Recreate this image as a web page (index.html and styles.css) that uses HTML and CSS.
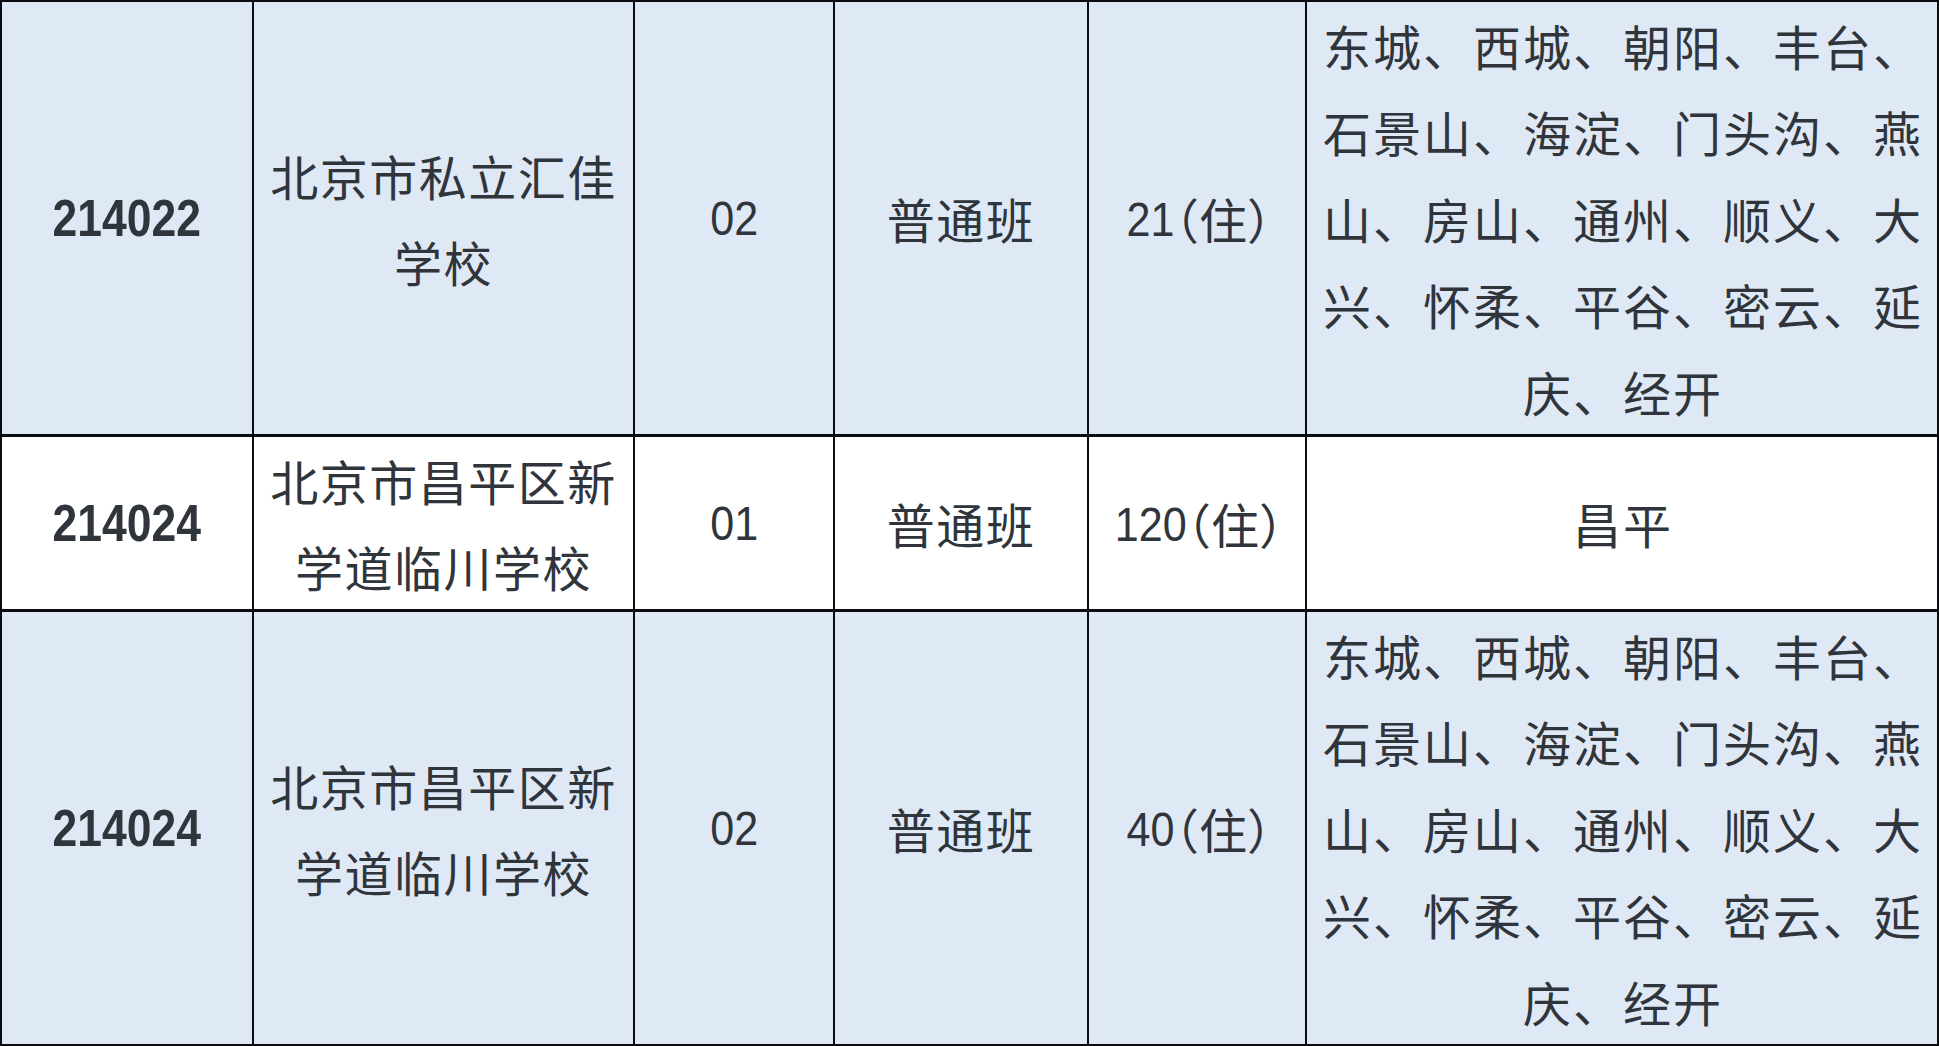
FILE: index.html
```html
<!DOCTYPE html>
<html lang="zh-CN">
<head>
<meta charset="utf-8">
<title>招生计划</title>
<link rel="stylesheet" href="styles.css">
</head>
<body>
<div class="sheet">
  <div class="cell blue code"><span class="digits">214022</span></div>
  <div class="cell blue cjk name">北京市私立汇佳学校</div>
  <div class="cell blue num"><span class="digits">02</span></div>
  <div class="cell blue cjk">普通班</div>
  <div class="cell blue quota"><span class="digits d2">21</span>（住）</div>
  <div class="cell blue cjk area">东城、西城、朝阳、丰台、<br>石景山、海淀、门头沟、燕<br>山、房山、通州、顺义、大<br>兴、怀柔、平谷、密云、延<br>庆、经开</div>

  <div class="cell white code"><span class="digits">214024</span></div>
  <div class="cell white cjk name">北京市昌平区新学道临川学校</div>
  <div class="cell white num"><span class="digits">01</span></div>
  <div class="cell white cjk">普通班</div>
  <div class="cell white quota"><span class="digits d3">120</span>（住）</div>
  <div class="cell white cjk area">昌平</div>

  <div class="cell blue code"><span class="digits">214024</span></div>
  <div class="cell blue cjk name">北京市昌平区新学道临川学校</div>
  <div class="cell blue num"><span class="digits">02</span></div>
  <div class="cell blue cjk">普通班</div>
  <div class="cell blue quota"><span class="digits d2">40</span>（住）</div>
  <div class="cell blue cjk area">东城、西城、朝阳、丰台、<br>石景山、海淀、门头沟、燕<br>山、房山、通州、顺义、大<br>兴、怀柔、平谷、密云、延<br>庆、经开</div>
</div>
</body>
</html>
```

FILE: styles.css
```css
html, body {
  margin: 0;
  padding: 0;
  background: #ffffff;
}

.sheet {
  width: 1939px;
  height: 1046px;
  box-sizing: border-box;
  display: grid;
  grid-template-columns: 250px 379px 198px 252px 216px 630px;
  grid-template-rows: 432px 172px 432px;
  column-gap: 2px;
  row-gap: 3px;
  padding: 2px;
  background: #0a0c10;
  color: #2f353b;
}

.cell {
  display: flex;
  align-items: center;
  justify-content: center;
  text-align: center;
  overflow: hidden;
}

.blue {
  background: #dfe9f5;
}

.white {
  background: #ffffff;
}

.cjk {
  font-family: "Noto Sans CJK SC", "Noto Sans", sans-serif;
  font-size: 48px;
  letter-spacing: 1.5px;
  line-height: 86px;
}

.name {
  padding: 0 14px;
}

.area {
  line-height: 86.6px;
  letter-spacing: 2px;
  padding: 0 0 0 2px;
}

.digits {
  display: inline-block;
  font-family: "Liberation Sans", Arial, sans-serif;
}

.code {
  font-family: "Liberation Sans", Arial, sans-serif;
  font-size: 52px;
  font-weight: bold;
}

.code .digits {
  transform: scaleX(0.855);
  letter-spacing: 0;
}

.num {
  font-family: "Liberation Sans", Arial, sans-serif;
  font-size: 49px;
}

.num .digits {
  transform: scaleX(0.88);
}

.quota {
  font-family: "Noto Sans CJK SC", sans-serif;
  font-size: 48px;
  font-feature-settings: "halt";
  line-height: 1;
  padding-left: 4px;
}

.quota .digits {
  font-size: 49px;
  transform: scaleX(0.88);
  transform-origin: right center;
  padding-top: 2px;
}

.quota .d2 {
  margin-left: -6.5px;
}

.quota .d3 {
  margin-left: -9.8px;
}
```
